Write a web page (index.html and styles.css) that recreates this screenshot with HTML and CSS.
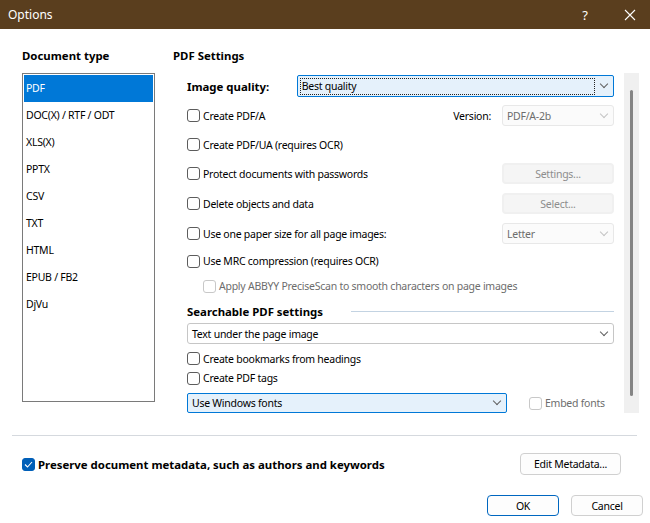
FILE: index.html
```html
<!DOCTYPE html>
<html>
<head>
    <title>Options</title>
    <link rel="stylesheet" href="styles.css">
</head>
<body>
    <div class="window">
        <!-- Title bar -->
        <div class="titlebar">
            <span class="title">Options</span>
            <span class="help">?</span>
            <svg class="close" width="12" height="12" viewBox="0 0 12 12"><path d="M1 1 L11 11 M11 1 L1 11" stroke="#fff" stroke-width="1.1" fill="none"/></svg>
        </div>

        <div class="panes">
            <!-- Document type list -->
            <div class="left">
                <h3>Document type</h3>
                <ul class="doc-list">
                    <li class="selected">PDF</li>
                    <li>DOC(X) / RTF / ODT</li>
                    <li>XLS(X)</li>
                    <li>PPTX</li>
                    <li>CSV</li>
                    <li>TXT</li>
                    <li>HTML</li>
                    <li>EPUB / FB2</li>
                    <li>DjVu</li>
                </ul>
            </div>

            <!-- PDF settings -->
            <div class="right">
                <h3>PDF Settings</h3>
                <div class="settings-body">
                    <div class="settings">
                        <div class="row r1">
                            <span class="bold-label">Image quality:</span>
                            <div class="combo focus wide-quality"><span class="focus-text">Best quality</span><span class="chev"></span></div>
                        </div>
                        <div class="row r2">
                            <span class="check"></span><span>Create PDF/A</span>
                            <span class="side-label">Version:</span>
                            <div class="combo disabled side"><span>PDF/A-2b</span><span class="chev"></span></div>
                        </div>
                        <div class="row r3">
                            <span class="check"></span><span>Create PDF/UA (requires OCR)</span>
                        </div>
                        <div class="row r4">
                            <span class="check"></span><span>Protect documents with passwords</span>
                            <button class="btn disabled side push">Settings...</button>
                        </div>
                        <div class="row r5">
                            <span class="check"></span><span>Delete objects and data</span>
                            <button class="btn disabled side push">Select...</button>
                        </div>
                        <div class="row r6">
                            <span class="check"></span><span>Use one paper size for all page images:</span>
                            <div class="combo disabled side push"><span>Letter</span><span class="chev"></span></div>
                        </div>
                        <div class="row r7">
                            <span class="check"></span><span>Use MRC compression (requires OCR)</span>
                        </div>
                        <div class="row r8 indent">
                            <span class="check off"></span><span class="muted">Apply ABBYY PreciseScan to smooth characters on page images</span>
                        </div>
                        <div class="row r9 section">
                            <span class="bold-label">Searchable PDF settings</span>
                            <span class="rule"></span>
                        </div>
                        <div class="row r10">
                            <div class="combo full"><span>Text under the page image</span><span class="chev"></span></div>
                        </div>
                        <div class="row r11">
                            <span class="check"></span><span>Create bookmarks from headings</span>
                        </div>
                        <div class="row r12">
                            <span class="check"></span><span>Create PDF tags</span>
                        </div>
                        <div class="row r13">
                            <div class="combo focus fonts"><span>Use Windows fonts</span><span class="chev"></span></div>
                            <span class="check off embed"></span><span class="muted">Embed fonts</span>
                        </div>
                    </div>
                    <div class="scrollbar"><div class="thumb"></div></div>
                </div>
            </div>
        </div>

        <div class="separator"></div>

        <div class="meta-row">
            <span class="check on"><svg width="9" height="7" viewBox="0 0 9 7"><path d="M1 3.5 L3.5 6 L8 1" stroke="#fff" stroke-width="1.1" fill="none"/></svg></span>
            <span class="meta-label">Preserve document metadata, such as authors and keywords</span>
            <button class="btn edit">Edit Metadata...</button>
        </div>

        <div class="actions">
            <button class="btn ok">OK</button>
            <button class="btn">Cancel</button>
        </div>
    </div>
</body>
</html>
```

FILE: styles.css
```css
body {
    margin: 0;
    padding: 0;
    background: #fff;
    font-family: "Noto Sans", "Open Sans", sans-serif;
    font-size: 10.5px;
    letter-spacing: -0.25px;
    color: #000;
}

.window {
    width: 650px;
    height: 523px;
    background: #fff;
    overflow: hidden;
    white-space: nowrap;
}

/* Title bar */
.titlebar {
    height: 29px;
    background: #5a3e1e;
    color: #fff;
    display: flex;
    align-items: center;
    padding: 0 0 0 8px;
    letter-spacing: 0;
}

.title {
    font-size: 12px;
    flex: 1;
}

.help {
    font-size: 13px;
    margin-right: 36px;
}

.close {
    margin-right: 14px;
}

/* Two panes */
.panes {
    display: flex;
    padding-top: 19px;
}

h3 {
    margin: 0 0 9px 0;
    font-size: 11.4px;
    font-weight: bold;
    line-height: 16px;
    letter-spacing: 0;
}

.left {
    margin-left: 22px;
    width: 133px;
}

.doc-list {
    list-style: none;
    margin: 0;
    padding: 1px;
    height: 325px;
    border: 1px solid #7a7a7a;
}

.doc-list li {
    height: 27px;
    line-height: 27px;
    padding-left: 2px;
}

.doc-list li.selected {
    background: #0078d7;
    color: #fff;
}

.right {
    margin-left: 18px;
    width: 466px;
}

.settings-body {
    display: flex;
    height: 340px;
}

.settings {
    width: 427px;
    margin-left: 14px;
    padding-top: 2px;
}

.scrollbar {
    width: 15px;
    margin-left: 10px;
    background: #f0f0f0;
    display: flex;
    justify-content: center;
    padding-top: 17px;
    box-sizing: border-box;
}

.thumb {
    width: 3px;
    height: 306px;
    background: #858585;
    border-radius: 2px;
}

/* Setting rows */
.row {
    display: flex;
    align-items: center;
    height: 21px;
}

.r1 { height: 22px; }
.r2 { margin-top: 8px; }
.r3 { margin-top: 8px; }
.r4 { margin-top: 8px; }
.r5 { margin-top: 9px; }
.r6 { margin-top: 9px; }
.r7 { margin-top: 7px; height: 20px; }
.r8 { margin-top: 5px; height: 20px; }
.r9 { margin-top: 5px; height: 20px; }
.r10 { margin-top: 2px; }
.r11 { margin-top: 5px; height: 19px; }
.r12 { height: 20px; }
.r13 { margin-top: 5px; height: 20px; }

.indent {
    padding-left: 16px;
}

.bold-label {
    font-weight: bold;
    font-size: 11.4px;
    letter-spacing: 0;
}

.r1 .bold-label {
    width: 110px;
}

.check {
    width: 11px;
    height: 11px;
    border: 1px solid #5c5c5c;
    border-radius: 3px;
    margin-right: 3px;
    flex-shrink: 0;
    display: inline-flex;
    align-items: center;
    justify-content: center;
    background: #fff;
}

.check.off {
    border-color: #c8c8c8;
}

.check.on {
    background: #005fb8;
    border-color: #005fb8;
}

.muted {
    color: #6d6d6d;
}

.side-label {
    margin-left: auto;
    margin-right: 11px;
}

.push {
    margin-left: auto;
}

/* Combo boxes */
.combo {
    height: 100%;
    box-sizing: border-box;
    border: 1px solid #c6c6c6;
    border-radius: 3px;
    background: #fff;
    display: flex;
    align-items: center;
    justify-content: space-between;
    padding: 0 6px 0 4px;
}

.combo.focus {
    background: #e5f1fb;
    border-color: #0078d7;
    border-radius: 2px;
}

.combo.disabled {
    background: #fbfbfb;
    border-color: #e8e8e8;
    color: #6d6d6d;
}

.wide-quality {
    width: 318px;
    padding-left: 2px;
}

.focus-text {
    flex: 1;
    border: 1px dotted #222;
    padding-left: 1px;
    margin-right: 6px;
    line-height: 15px;
}

.side {
    width: 112px;
}

.full {
    width: 100%;
}

.fonts {
    width: 320px;
    margin-right: 22px;
}

.chev {
    width: 5px;
    height: 5px;
    border-right: 1px solid #606060;
    border-bottom: 1px solid #606060;
    transform: rotate(45deg);
    margin-top: -4px;
}

.combo.disabled .chev {
    border-color: #c4c4c4;
}

.section .rule {
    flex: 1;
    height: 1px;
    background: #c3d3e2;
    margin-left: 28px;
}

/* Buttons */
.btn {
    font-family: inherit;
    font-size: 10.5px;
    letter-spacing: -0.25px;
    height: 22px;
    box-sizing: border-box;
    border: 1px solid #d0d0d0;
    border-radius: 4px;
    background: #fdfdfd;
    color: #000;
    padding: 0;
}

.btn.disabled {
    height: 21px;
    background: #f5f5f5;
    border: 2px solid #f0f0f0;
    color: #8d8d8d;
}

/* Bottom area */
.separator {
    height: 1px;
    background: #d5d9de;
    margin: 22px 13px 0 12px;
}

.meta-row {
    display: flex;
    align-items: center;
    margin-top: 17px;
    padding-left: 22px;
    height: 22px;
}

.meta-label {
    font-weight: bold;
    font-size: 11.4px;
    letter-spacing: 0;
}

.edit {
    margin-left: auto;
    margin-right: 29px;
    width: 101px;
}

.actions {
    display: flex;
    justify-content: flex-end;
    gap: 12px;
    margin-top: 20px;
    padding-right: 7px;
}

.actions .btn {
    width: 72px;
    height: 21px;
}

.btn.ok {
    border-color: #0067c0;
}
```
